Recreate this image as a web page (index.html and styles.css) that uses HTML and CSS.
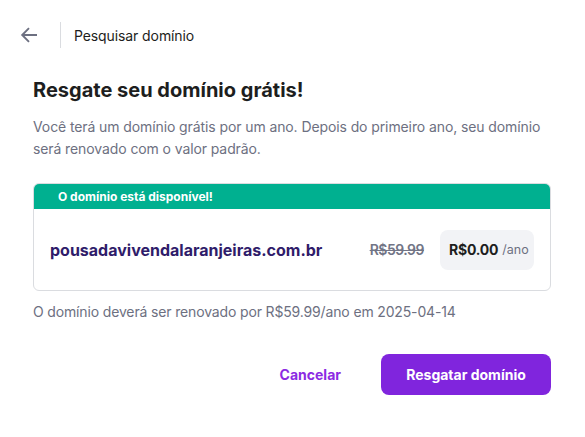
FILE: index.html
```html
<!DOCTYPE html>
<html lang="pt">
<head>
<meta charset="utf-8">
<link rel="stylesheet" href="styles.css">
</head>
<body>
<div class="modal">
  <header class="top">
    <button class="back" aria-label="Voltar">
      <svg width="18" height="18" viewBox="0 0 18 18"><path d="M17 9H2.5M9 2.2L2.2 9 9 15.8" fill="none" stroke="#6d7081" stroke-width="1.9"/></svg>
    </button>
    <span class="divider"></span>
    <span class="crumb">Pesquisar domínio</span>
  </header>
  <main class="content">
    <h1 class="title">Resgate seu domínio grátis!</h1>
    <p class="desc">Você terá um domínio grátis por um ano. Depois do primeiro ano, seu domínio será renovado com o valor padrão.</p>
    <div class="card">
      <div class="card-head">O domínio está disponível!</div>
      <div class="card-body">
        <span class="domain">pousadavivendalaranjeiras.com.br</span>
        <span class="old">R$59.99</span>
        <span class="price"><b>R$0.00</b> <span class="per">/ano</span></span>
      </div>
    </div>
    <p class="note">O domínio deverá ser renovado por R$59.99/ano em 2025-04-14</p>
    <div class="actions">
      <button class="btn-text">Cancelar</button>
      <button class="btn-primary">Resgatar domínio</button>
    </div>
  </main>
</div>
</body>
</html>
```

FILE: styles.css
```css
* { box-sizing: border-box; }
html, body { margin: 0; padding: 0; background: #fff; }
body { font-family: Inter, "Noto Sans", sans-serif; color: #1d1e20; }
.modal { width: 585px; height: 437px; overflow: hidden; }
.top { display: flex; align-items: center; height: 26px; margin-top: 22px; padding-left: 20px; }
.back { border: 0; background: none; padding: 0; width: 18px; height: 18px; display: flex; cursor: pointer; }
.divider { width: 1px; height: 26px; background: #dadce0; margin-left: 22px; }
.crumb { margin-left: 13px; font-size: 14px; color: #1d1e20; letter-spacing: -0.1px; }
.content { padding: 0 34px 0 33px; }
.title { margin: 28px 0 0; font-size: 20px; font-weight: 700; line-height: 28px; letter-spacing: 0; }
.desc { margin: 12px 0 0; font-size: 14px; line-height: 22px; color: #6d7081; letter-spacing: -0.1px; }
.card { margin-top: 23px; border: 1px solid #dadce0; border-radius: 6px; overflow: hidden; }
.card-head { background: #00b090; color: #fff; font-weight: 700; font-size: 12px; height: 25px; line-height: 25px; padding-left: 24px; letter-spacing: 0; }
.card-body { display: flex; align-items: center; height: 81px; padding: 0 16px 0 16px; }
.domain { flex: 1; font-size: 16px; font-weight: 700; color: #2f1c6a; letter-spacing: 0; }
.old { font-size: 14px; font-weight: 600; color: #727586; text-decoration: line-through; margin-right: 16px; letter-spacing: -0.5px; }
.price { background: #f2f3f6; border-radius: 8px; height: 40px; width: 94px; display: flex; align-items: center; padding: 0 0 0 9px; font-size: 14px; white-space: nowrap; }
.price b { font-weight: 700; font-size: 14px; color: #1d1e20; letter-spacing: -0.2px; }
.per { color: #6d7081; font-size: 12.5px; margin-left: 4px; }
.note { margin: 11px 0 0; font-size: 14px; line-height: 20px; color: #6d7081; letter-spacing: -0.15px; }
.actions { display: flex; justify-content: flex-end; align-items: center; margin-top: 32px; }
.btn-text { border: 0; background: none; color: #8c2be3; font-family: inherit; font-weight: 700; font-size: 14px; padding: 0 20px; height: 41px; margin-right: 20px; cursor: pointer; }
.btn-primary { border: 0; background: #8025dd; color: #fff; font-family: inherit; font-weight: 700; font-size: 14px; height: 41px; width: 170px; border-radius: 8px; cursor: pointer; }
```
